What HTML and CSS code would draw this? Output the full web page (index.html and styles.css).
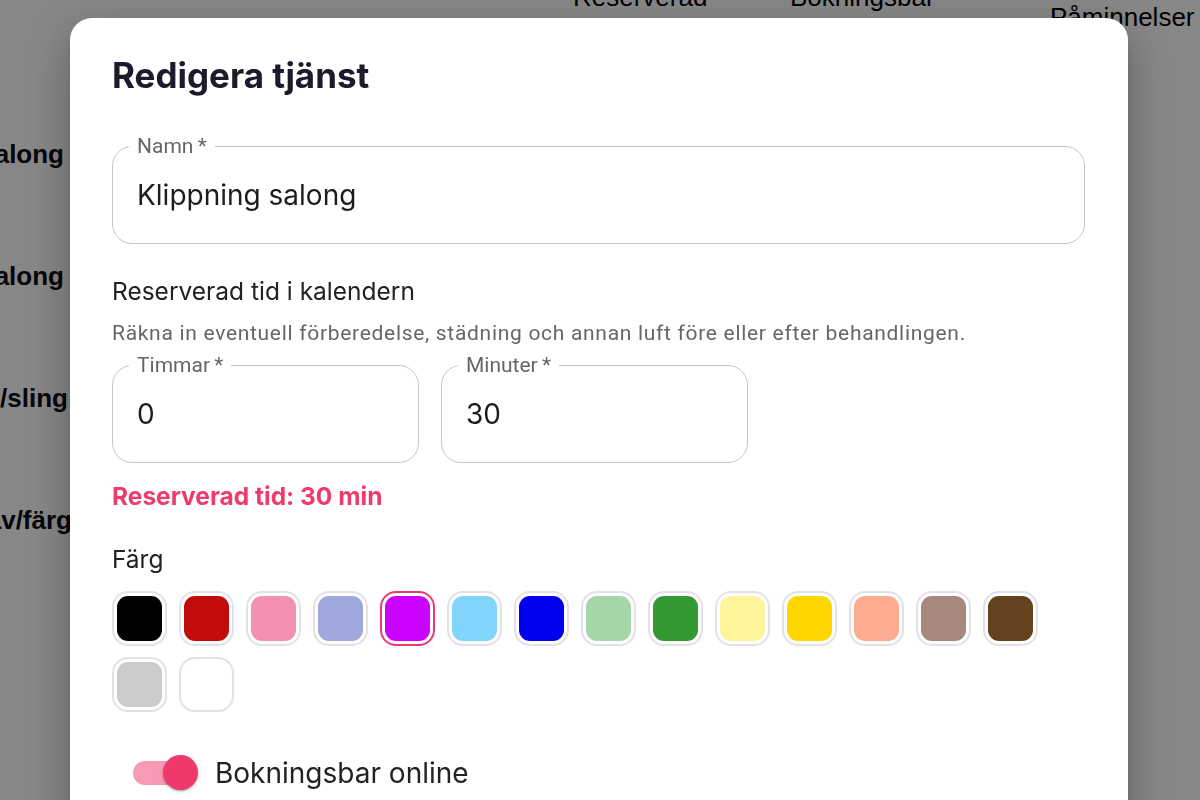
FILE: index.html
```html
<!DOCTYPE html>
<html lang="sv">
<head>
    <meta charset="UTF-8">
    <meta name="viewport" content="width=device-width, initial-scale=1.0">
    <title>Redigera tjänst</title>
    <link rel="stylesheet" href="styles.css">
</head>
<body>
    <!-- Sidan bakom dialogen -->
    <div class="page">
        <div class="page-head">
            <div class="head-cell"></div>
            <div class="head-cell">Reserverad</div>
            <div class="head-cell">Bokningsbar</div>
            <div class="head-cell head-single">Påminnelser</div>
        </div>
        <div class="page-rows">
            <div class="row"><span class="row-name">Klippning salong</span></div>
            <div class="row"><span class="row-name">Färgning salong</span></div>
            <div class="row"><span class="row-name name-mid">Folieslingor/sling</span></div>
            <div class="row"><span class="row-name name-long">Toning av/färg</span></div>
        </div>
    </div>

    <!-- Dialog -->
    <div class="backdrop">
        <section class="modal">
            <h2 class="modal-title">Redigera tjänst</h2>

            <fieldset class="field field-wide">
                <legend>Namn&thinsp;*</legend>
                <div class="field-value">Klippning salong</div>
            </fieldset>

            <p class="section-label">Reserverad tid i kalendern</p>
            <p class="section-help">Räkna in eventuell förberedelse, städning och annan luft före eller efter behandlingen.</p>

            <div class="time-row">
                <fieldset class="field field-half">
                    <legend>Timmar&thinsp;*</legend>
                    <div class="field-value">0</div>
                </fieldset>
                <fieldset class="field field-half">
                    <legend>Minuter&thinsp;*</legend>
                    <div class="field-value">30</div>
                </fieldset>
            </div>

            <p class="time-total">Reserverad tid: 30 min</p>

            <p class="section-label label-color">Färg</p>
            <div class="swatches">
                <span class="swatch"><span class="swatch-fill" style="background:#000000"></span></span>
                <span class="swatch"><span class="swatch-fill" style="background:#c20c0c"></span></span>
                <span class="swatch"><span class="swatch-fill" style="background:#f291b1"></span></span>
                <span class="swatch"><span class="swatch-fill" style="background:#9ea8da"></span></span>
                <span class="swatch selected"><span class="swatch-fill" style="background:#cc00ff"></span></span>
                <span class="swatch"><span class="swatch-fill" style="background:#81d4fa"></span></span>
                <span class="swatch"><span class="swatch-fill" style="background:#0000ee"></span></span>
                <span class="swatch"><span class="swatch-fill" style="background:#a5d6a7"></span></span>
                <span class="swatch"><span class="swatch-fill" style="background:#339933"></span></span>
                <span class="swatch"><span class="swatch-fill" style="background:#fff59d"></span></span>
                <span class="swatch"><span class="swatch-fill" style="background:#ffd600"></span></span>
                <span class="swatch"><span class="swatch-fill" style="background:#ffab91"></span></span>
                <span class="swatch"><span class="swatch-fill" style="background:#a6887d"></span></span>
                <span class="swatch"><span class="swatch-fill" style="background:#64421d"></span></span>
                <span class="swatch"><span class="swatch-fill" style="background:#cccccc"></span></span>
                <span class="swatch"><span class="swatch-fill" style="background:#ffffff"></span></span>
            </div>

            <label class="toggle-row">
                <span class="switch">
                    <span class="switch-track"></span>
                    <span class="switch-thumb"></span>
                </span>
                <span class="toggle-text">Bokningsbar online</span>
            </label>
        </section>
    </div>
</body>
</html>
```

FILE: styles.css
```css
/* Sidan bakom */
body {
    margin: 0;
    height: 800px;
    overflow: hidden;
    background-color: #fff;
    font-family: "Liberation Sans", Arial, sans-serif;
    color: #000;
}
.page-head {
    display: grid;
    grid-template-columns: 573px 217px 260px 1fr;
    margin-top: -17px;
    font-size: 26px;
    line-height: 28px;
}
.head-single {
    padding-top: 20px;
}
.page-rows {
    margin-top: 62px;
}
.row {
    display: flex;
    align-items: center;
    height: 122px;
}
.row-name {
    display: block;
    width: 64px;
    text-align: right;
    white-space: nowrap;
    direction: rtl;
    font-size: 26px;
    line-height: 28px;
    font-weight: bold;
    color: #0a0a14;
}
.row-name.name-mid {
    width: 68px;
}
.row-name.name-long {
    width: 72px;
}

/* Dialog */
.backdrop {
    position: fixed;
    inset: 0;
    background-color: rgba(0, 0, 0, 0.47);
    padding: 18px 0 0 70px;
}
.modal {
    width: 1058px;
    height: 840px;
    box-sizing: border-box;
    padding: 37px 43px 0 42px;
    background-color: #fff;
    border-radius: 22px;
    box-shadow: 0 11px 15px -7px rgba(0, 0, 0, 0.2), 0 24px 38px 3px rgba(0, 0, 0, 0.14), 0 9px 46px 8px rgba(0, 0, 0, 0.12);
    font-family: Inter, "Noto Sans", sans-serif;
    color: #212121;
}
.modal-title {
    margin: 0;
    font-size: 35px;
    line-height: 40px;
    font-weight: 700;
    color: #1c1b2b;
}
.field {
    margin: 0;
    padding: 20px 24px 31px;
    border: 1.5px solid #c6c6c6;
    border-radius: 20px;
    min-width: 0;
}
.field legend {
    margin-left: -8px;
    padding: 0 8px;
    font-family: Roboto, "Liberation Sans", sans-serif;
    font-size: 21px;
    line-height: 24px;
    color: #666;
}
.field-value {
    font-size: 28px;
    line-height: 34px;
    color: #1c1c1c;
}
.field-wide {
    margin-top: 39px;
}
.section-label {
    margin: 32px 0 0;
    font-size: 24.5px;
    line-height: 30px;
    color: #222;
}
.section-help {
    margin: 15px 0 0;
    font-family: Roboto, "Liberation Sans", sans-serif;
    font-size: 21px;
    line-height: 24px;
    letter-spacing: 0.7px;
    color: #666;
}
.time-row {
    display: flex;
    gap: 22px;
    margin-top: 8px;
}
.field-half {
    width: 307px;
    box-sizing: border-box;
}
.time-total {
    margin: 18px 0 0;
    font-size: 24.5px;
    line-height: 30px;
    font-weight: 700;
    color: #ef3a6c;
}
.label-color {
    margin-top: 33px;
}

/* Färgval */
.swatches {
    display: flex;
    flex-wrap: wrap;
    gap: 11px 12px;
    margin-top: 17px;
}
.swatch {
    width: 55px;
    height: 55px;
    box-sizing: border-box;
    padding: 3px;
    border: 2px solid #e4e0e8;
    border-radius: 16px;
    background-color: #fff;
}
.swatch.selected {
    border-color: #ef3a6c;
}
.swatch-fill {
    display: block;
    width: 100%;
    height: 100%;
    border-radius: 11px;
}

/* Växlare */
.toggle-row {
    display: flex;
    align-items: center;
    margin-top: 43px;
    padding-left: 21px;
}
.switch {
    position: relative;
    display: flex;
    align-items: center;
    width: 65px;
    height: 35px;
}
.switch-track {
    width: 59px;
    height: 24px;
    border-radius: 12px;
    background-color: #f89ab3;
}
.switch-thumb {
    position: absolute;
    top: 0;
    right: 0;
    width: 35px;
    height: 35px;
    border-radius: 50%;
    background-color: #f0386b;
    box-shadow: 0 2px 2px -1px rgba(0, 0, 0, 0.2), 0 1px 2px rgba(0, 0, 0, 0.14), 0 1px 5px rgba(0, 0, 0, 0.12);
}
.toggle-text {
    margin-left: 17px;
    font-size: 28px;
    line-height: 34px;
    color: #222;
}
```
